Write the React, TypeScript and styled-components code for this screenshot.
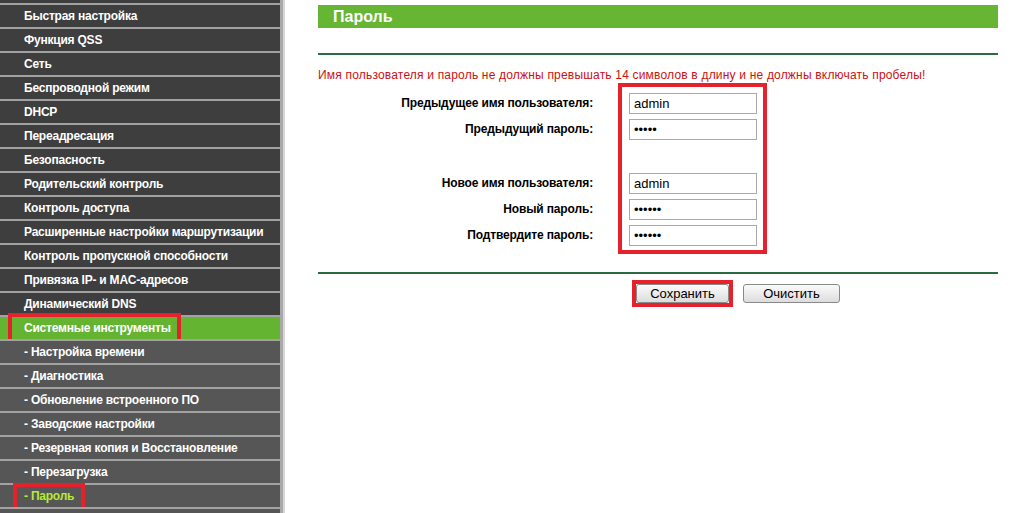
import { FC } from 'react'
import styled, { createGlobalStyle } from 'styled-components'

type ItemKind = 'main' | 'active' | 'sub' | 'current'

interface MenuEntry {
  label: string
  kind: ItemKind
  marked?: boolean
}

const menu: MenuEntry[] = [
  { label: 'Быстрая настройка', kind: 'main' },
  { label: 'Функция QSS', kind: 'main' },
  { label: 'Сеть', kind: 'main' },
  { label: 'Беспроводной режим', kind: 'main' },
  { label: 'DHCP', kind: 'main' },
  { label: 'Переадресация', kind: 'main' },
  { label: 'Безопасность', kind: 'main' },
  { label: 'Родительский контроль', kind: 'main' },
  { label: 'Контроль доступа', kind: 'main' },
  { label: 'Расширенные настройки маршрутизации', kind: 'main' },
  { label: 'Контроль пропускной способности', kind: 'main' },
  { label: 'Привязка IP- и MAC-адресов', kind: 'main' },
  { label: 'Динамический DNS', kind: 'main' },
  { label: 'Системные инструменты', kind: 'active', marked: true },
  { label: '- Настройка времени', kind: 'sub' },
  { label: '- Диагностика', kind: 'sub' },
  { label: '- Обновление встроенного ПО', kind: 'sub' },
  { label: '- Заводские настройки', kind: 'sub' },
  { label: '- Резервная копия и Восстановление', kind: 'sub' },
  { label: '- Перезагрузка', kind: 'sub' },
  { label: '- Пароль', kind: 'current', marked: true },
  { label: '', kind: 'sub' },
]

interface Field {
  label: string
  value: string
  type: 'text' | 'password'
}

const oldFields: Field[] = [
  { label: 'Предыдущее имя пользователя:', value: 'admin', type: 'text' },
  { label: 'Предыдущий пароль:', value: 'admin', type: 'password' },
]

const newFields: Field[] = [
  { label: 'Новое имя пользователя:', value: 'admin', type: 'text' },
  { label: 'Новый пароль:', value: 'qwerty', type: 'password' },
  { label: 'Подтвердите пароль:', value: 'qwerty', type: 'password' },
]

const rowBg: Record<ItemKind, string> = {
  main: '#3e3e3e',
  active: '#64b431',
  sub: '#565656',
  current: '#565656',
}

const App: FC = () => (
  <>
    <GlobalStyle />
    <Page>
      <Sidebar>
        <MenuList>
          {menu.map((item, i) => (
            <MenuItem key={i} $kind={item.kind}>
              {item.label}
              {item.marked && <Marker $kind={item.kind} />}
            </MenuItem>
          ))}
        </MenuList>
      </Sidebar>
      <SideEdge />
      <Content>
        <Panel>
          <TitleBar>Пароль</TitleBar>
          <Rule />
          <Warning>
            Имя пользователя и пароль не должны превышать 14 символов в длину и не должны
            включать пробелы!
          </Warning>
          <Form>
            <Labels>
              {oldFields.map((f) => (
                <Label key={f.label}>{f.label}</Label>
              ))}
              <Spacer />
              {newFields.map((f) => (
                <Label key={f.label}>{f.label}</Label>
              ))}
            </Labels>
            <Inputs>
              {oldFields.map((f) => (
                <InputRow key={f.label}>
                  <TextInput type={f.type} defaultValue={f.value} />
                </InputRow>
              ))}
              <Spacer />
              {newFields.map((f) => (
                <InputRow key={f.label}>
                  <TextInput type={f.type} defaultValue={f.value} />
                </InputRow>
              ))}
            </Inputs>
          </Form>
          <Rule $top={18} />
          <Actions>
            <SaveFrame>
              <Button $width={93}>Сохранить</Button>
            </SaveFrame>
            <Button $width={97}>Очистить</Button>
          </Actions>
        </Panel>
      </Content>
    </Page>
  </>
)

const GlobalStyle = createGlobalStyle`
  html, body {
    margin: 0;
    padding: 0;
    background: #ffffff;
    overflow: hidden;
  }
  body {
    font-family: "Liberation Sans", Arial, sans-serif;
  }
`

const Page = styled.div`
  display: flex;
  width: 1030px;
  height: 513px;
  overflow: hidden;
`

const Sidebar = styled.div`
  width: 280px;
  flex-shrink: 0;
  background: #3e3e3e;
  padding-top: 3px;
  box-sizing: border-box;
`

const MenuList = styled.ul`
  list-style: none;
  margin: 0;
  padding: 0;
`

const MenuItem = styled.li<{ $kind: ItemKind }>`
  position: relative;
  height: 22px;
  line-height: 22px;
  border-top: 2px solid #a2a2a2;
  background: ${({ $kind }) => rowBg[$kind]};
  padding-left: 24px;
  color: ${({ $kind }) => ($kind === 'current' ? '#b6ea3a' : '#ffffff')};
  font-size: 12px;
  font-weight: bold;
  letter-spacing: -0.22px;
  white-space: nowrap;
`

const Marker = styled.span<{ $kind: ItemKind }>`
  position: absolute;
  box-sizing: border-box;
  border: 4px solid #e5212b;
  left: ${({ $kind }) => ($kind === 'active' ? 8 : 13)}px;
  top: ${({ $kind }) => ($kind === 'active' ? -4 : -2)}px;
  width: ${({ $kind }) => ($kind === 'active' ? 173 : 72)}px;
  height: ${({ $kind }) => ($kind === 'active' ? 30 : 29)}px;
`

const SideEdge = styled.div`
  width: 5px;
  flex-shrink: 0;
  background: linear-gradient(to right, #a9a9a9 0, #a9a9a9 3px, #d6d6d6 3px, #d6d6d6 5px);
`

const Content = styled.div`
  flex: 1;
  background: #ffffff;
  padding: 5px 0 0 33px;
`

const Panel = styled.div`
  width: 680px;
  display: flex;
  flex-direction: column;
`

const TitleBar = styled.div`
  height: 23px;
  line-height: 23px;
  background: #66b533;
  color: #ffffff;
  font-size: 16px;
  font-weight: bold;
  padding-left: 15px;
`

const Rule = styled.div<{ $top?: number }>`
  height: 2px;
  margin-top: ${({ $top }) => $top ?? 25}px;
  background: #2c6a42;
`

const Warning = styled.div`
  margin-top: 13px;
  line-height: 14px;
  font-size: 12px;
  letter-spacing: 0.19px;
  color: #cc1111;
  white-space: nowrap;
`

const Form = styled.div`
  display: flex;
  margin-top: 1px;
`

const Labels = styled.div`
  width: 275px;
  padding-top: 7px;
  display: flex;
  flex-direction: column;
  align-items: flex-end;
`

const Label = styled.div`
  height: 26px;
  line-height: 26px;
  font-size: 12px;
  font-weight: bold;
  letter-spacing: -0.14px;
  color: #000000;
  white-space: nowrap;
`

const Spacer = styled.div`
  height: 28px;
`

const Inputs = styled.div`
  margin-left: 25px;
  border: 4px solid #e5212b;
  padding: 3px 6px 2px 7px;
  display: flex;
  flex-direction: column;
`

const InputRow = styled.div`
  height: 26px;
  display: flex;
  align-items: center;
`

const TextInput = styled.input`
  box-sizing: border-box;
  width: 128px;
  height: 21px;
  border: 1px solid #a9a9a9;
  padding: 0 4px;
  font-family: "Liberation Sans", Arial, sans-serif;
  font-size: 13px;
  color: #000000;
  background: #ffffff;
  outline: none;
`

const Actions = styled.div`
  display: flex;
  align-items: center;
  gap: 10px;
  margin-top: 6px;
  padding-left: 314px;
`

const SaveFrame = styled.div`
  display: flex;
  border: 4px solid #e5212b;
`

const Button = styled.button<{ $width: number }>`
  width: ${({ $width }) => $width}px;
  height: 19px;
  padding: 0;
  border: 1px solid #8a8a8a;
  border-radius: 3px;
  background: linear-gradient(to bottom, #fafafa 0%, #ececec 50%, #dcdcdc 100%);
  font-family: "Liberation Sans", Arial, sans-serif;
  font-size: 13px;
  color: #000000;
`

export default App
